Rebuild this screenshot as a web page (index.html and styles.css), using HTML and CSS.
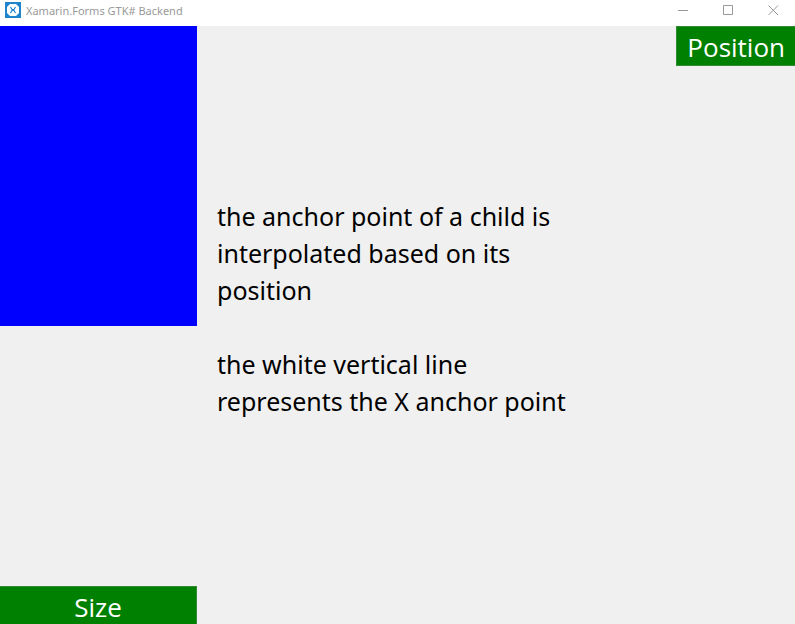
FILE: index.html
```html
<!DOCTYPE html>
<html lang="en">
<head>
<meta charset="utf-8">
<title>Xamarin.Forms GTK# Backend</title>
<link rel="stylesheet" href="styles.css">
</head>
<body>
<header class="titlebar">
  <svg class="logo" viewBox="0 0 16 16" aria-hidden="true">
    <rect width="16" height="16" fill="#1e84cc"/>
    <path d="M5 2h6l3 3v6l-3 3H5l-3-3V5z" fill="#fff"/>
    <path d="M5.500 5l1.500 2.500h2L10.500 5M5.500 11L7 8.500h2l1.500 2.500" stroke="#1e84cc" stroke-width="1.200" fill="none"/>
  </svg>
  <h1 class="title">Xamarin.Forms GTK# Backend</h1>
  <button class="control" aria-label="Minimize"><svg viewBox="0 0 12 12"><path d="M1 6.500h10"/></svg></button>
  <button class="control" aria-label="Maximize"><svg viewBox="0 0 12 12"><path d="M1.500 1.500h9v9h-9z"/></svg></button>
  <button class="control" aria-label="Close"><svg viewBox="0 0 12 12"><path d="M1.500 1.500l9.500 9.500M11 1.500L1.500 11"/></svg></button>
</header>
<main class="content">
  <section class="side">
    <div class="box"></div>
    <button class="action">Size</button>
  </section>
  <section class="message">
    <p>the anchor point of a child is interpolated based on its position</p>
    <p>the white vertical line represents the X anchor point</p>
  </section>
  <section class="side end">
    <button class="action">Position</button>
  </section>
</main>
</body>
</html>
```
FILE: styles.css
```css
* {
  box-sizing: border-box;
}

body {
  margin: 0;
  height: 100vh;
  display: flex;
  flex-direction: column;
  background: #f0f0f0;
  color: #000;
  font-family: "Noto Sans", "Open Sans", sans-serif;
  overflow: hidden;
}

.titlebar {
  display: flex;
  flex: none;
  height: 26px;
  padding-left: 5px;
  background: #fff;
  color: #999;
}

.logo {
  width: 16px;
  height: 16px;
  margin: 2px 5px 0 0;
}

.title {
  flex: 1;
  margin: 0;
  font-size: 11px;
  font-weight: 400;
  line-height: 22px;
}

.control {
  display: flex;
  justify-content: center;
  width: 45px;
  height: 20px;
  padding: 4px 0 0;
  border: 0;
  background: none;
}

.control svg {
  width: 12px;
  height: 12px;
  fill: none;
  stroke: #999;
}

.content {
  flex: 1;
  display: grid;
  grid-template-columns: 197px 1fr 197px;
  column-gap: 20px;
  margin-bottom: -2px;
}

.side {
  display: flex;
  flex-direction: column;
  justify-content: space-between;
}

.end {
  align-items: flex-end;
}

.box {
  height: 300px;
  background: #00f;
}

.action {
  height: 40px;
  padding: 2px 10px 0;
  border: 1px solid #338a33;
  border-left-width: 0;
  background: #008000;
  color: #fff;
  font: 26px/36px "Open Sans", "Noto Sans", sans-serif;
}

.end .action {
  border-width: 1px 0 1px 1px;
}

.message {
  align-self: center;
  padding-bottom: 34px;
  font-size: 25px;
  line-height: 37px;
}

.message p {
  margin: 0;
}

.message p + p {
  margin-top: 37px;
}
```
